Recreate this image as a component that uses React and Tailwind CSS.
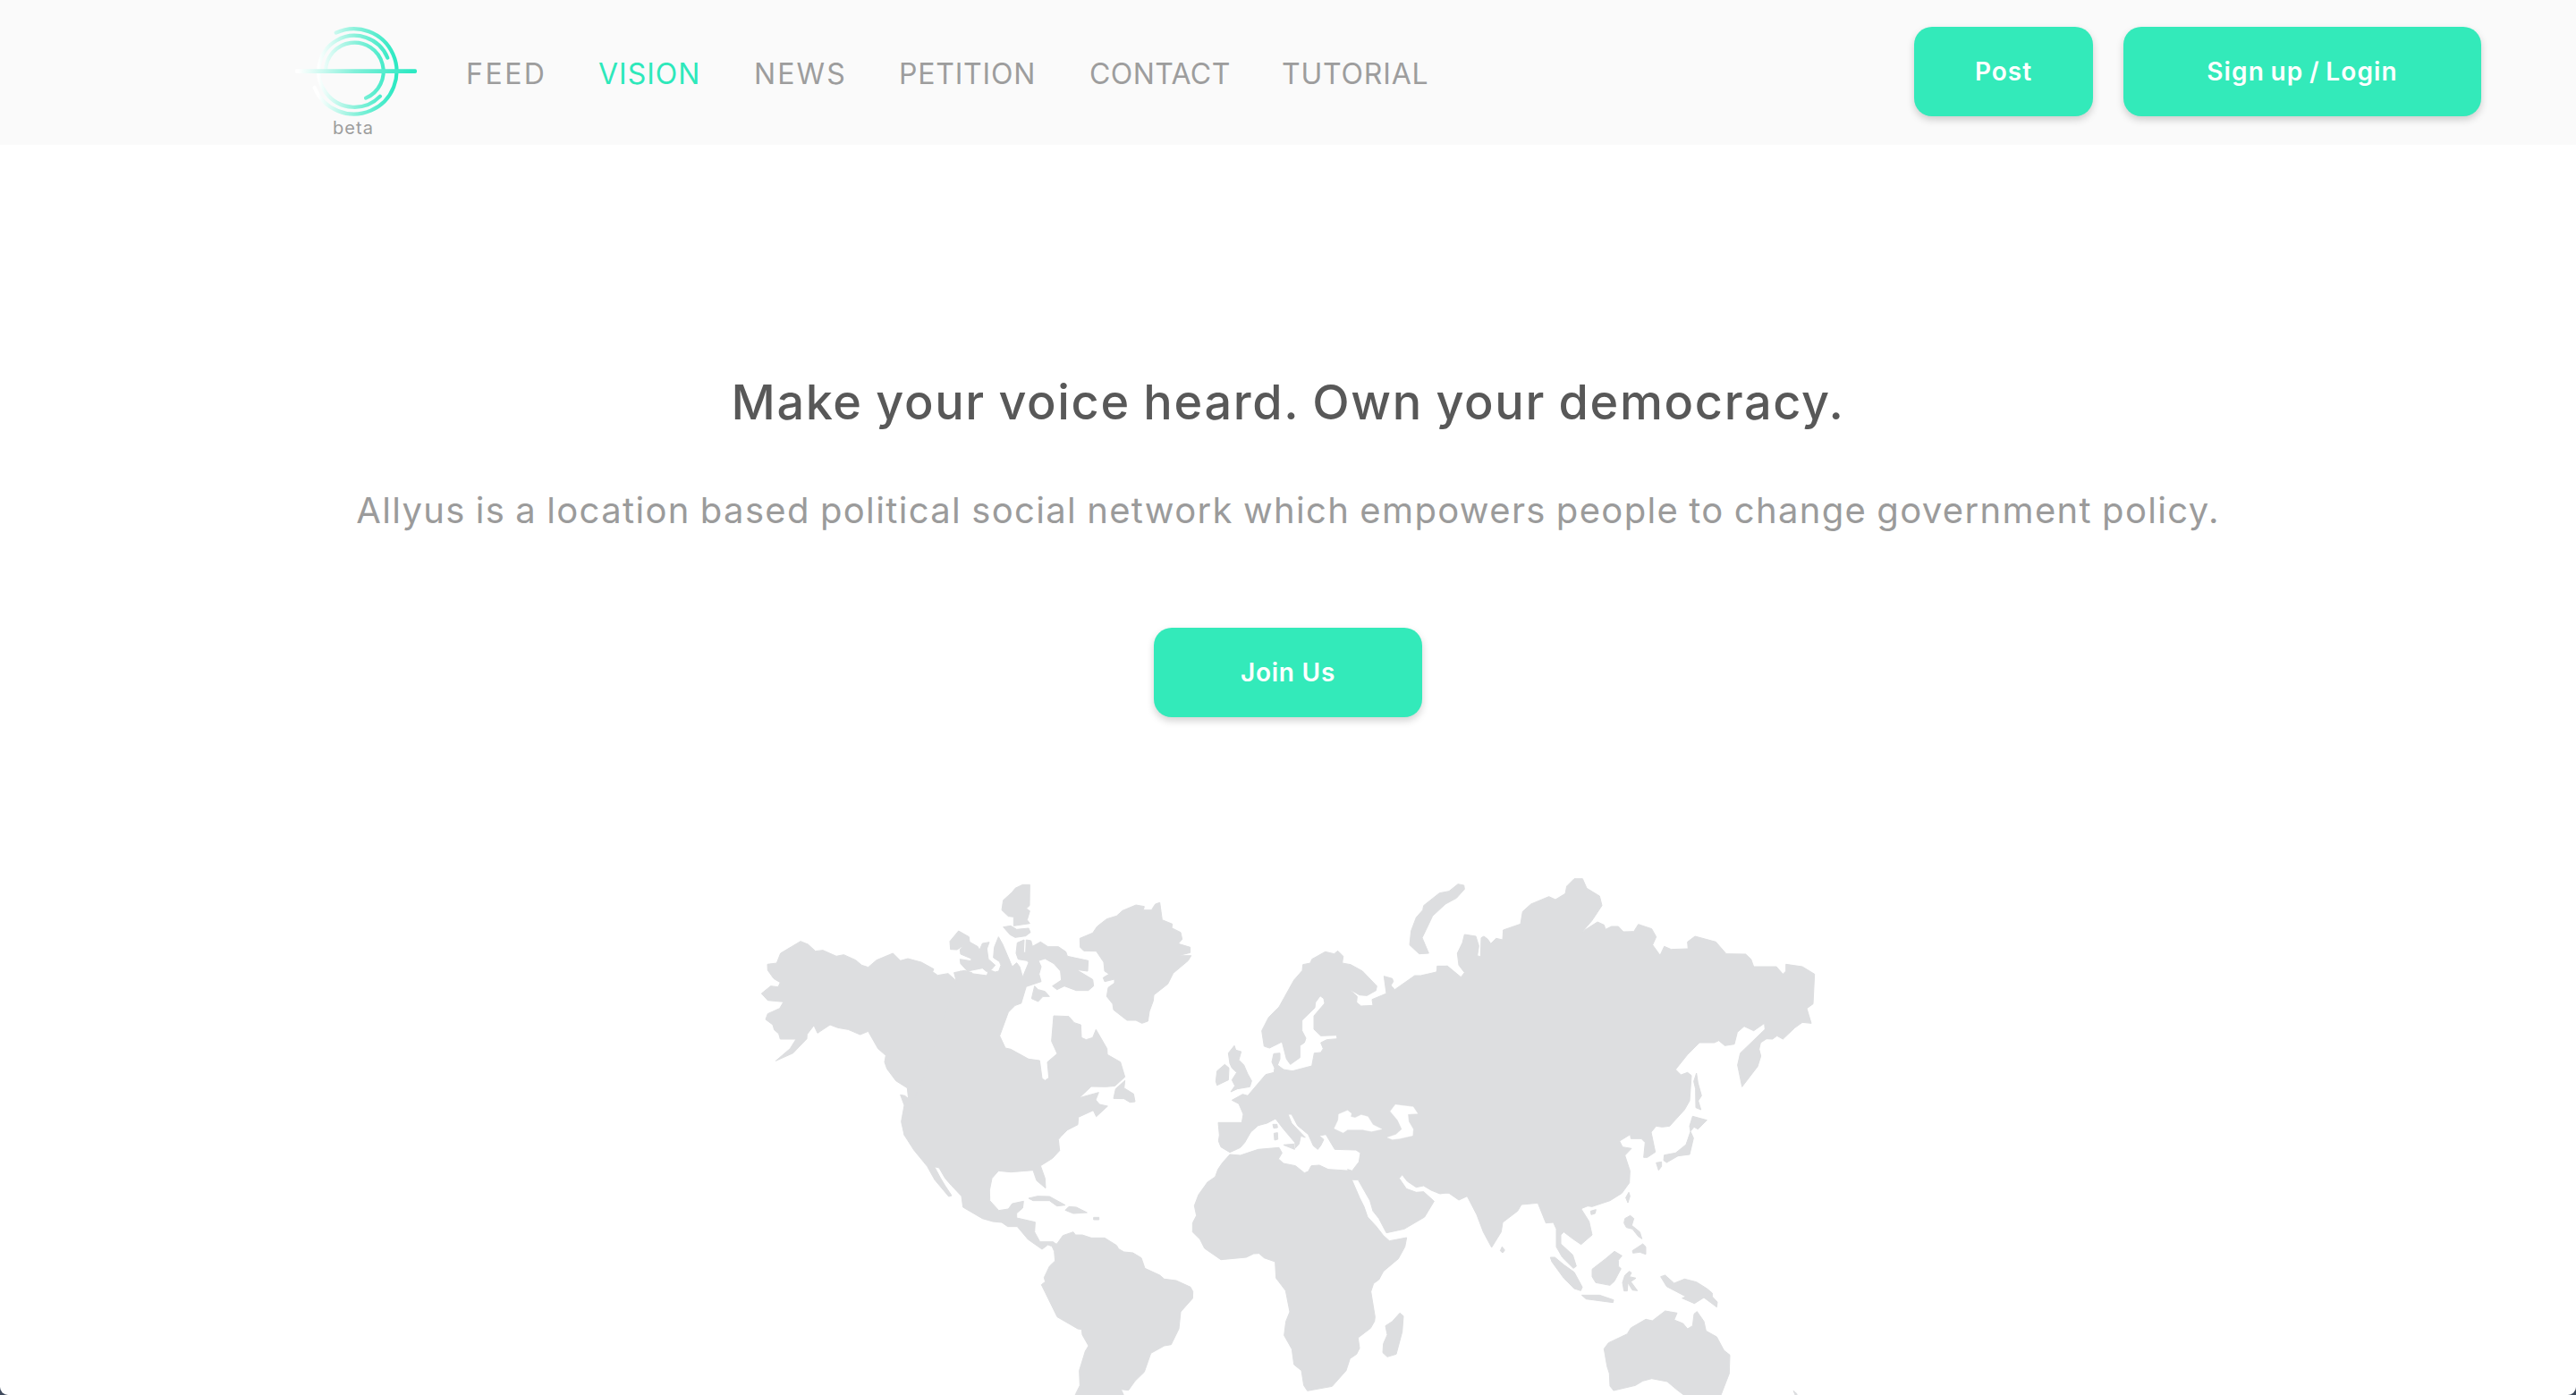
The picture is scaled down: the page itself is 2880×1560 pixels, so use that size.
import React from "react";

const navItems = [
  { label: "FEED", cls: "w-[148px] tracking-[2.5px] text-[#9d9d9d]" },
  { label: "VISION", cls: "w-[174px] tracking-[1px] text-[#2ee8ba]" },
  { label: "NEWS", cls: "w-[162px] tracking-[2.1px] text-[#9d9d9d]" },
  { label: "PETITION", cls: "w-[213px] tracking-[0.8px] text-[#9d9d9d]" },
  { label: "CONTACT", cls: "w-[215px] tracking-[0.4px] text-[#9d9d9d]" },
  { label: "TUTORIAL", cls: "w-[170px] tracking-[0.8px] text-[#9d9d9d]" },
];

// Each tile holds outlines in its own coordinates; x/y place the tile on the map.
const landTiles = [
  {
    x: 0,
    y: 0,
    d: [
      "M165,250L190,260L215,283L240,280L285,300L310,295L350,313L370,330L392,337L420,313L475,290L500,315L525,308L570,320L612,343L608,352L625,364L660,358L687,382L680,355L715,348L740,355L740,900L513,900L503,855L513,800L500,765L515,768L527,778L523,742L485,718L455,678L447,655L451,633L425,610L392,552L365,563L325,546L290,540L264,530L222,558L210,532L187,562L186,577L140,625L82,651L130,610L150,578L97,578L92,560L77,547L72,530L48,512L55,493L95,475L108,453L55,448L34,425L65,400L90,403L97,388L75,375L55,347L54,327L85,323L98,290Z",
    ],
  },
  {
    x: 600,
    y: 0,
    d: [
      // North and Central America
      "M100,350L130,357L190,365L197,345L218,353L230,350L237,330L232,318L212,305L215,270L229,235L243,260L275,335L290,322L300,335L310,370L330,322L325,315L295,310L288,290L292,255L315,245L313,285L320,290L322,245L338,248L343,267L370,252L395,268L430,268L455,285L460,300L530,315L528,350L490,345L545,378L548,400L530,415L490,415L450,400L425,412L410,400L440,380L437,350L415,325L385,308L363,315L372,335L365,360L372,385L322,402L305,458L285,465L262,488L233,567L252,608L270,612L330,645L367,650L375,710L385,717L398,708L393,655L426,627L407,585L414,500L465,502L483,523L505,530L507,573L523,580L545,573L556,546L593,610L594,630L638,655L653,705L620,735L590,738L540,737L500,775L565,757L555,782L568,797L595,803L557,838L547,817L497,840L495,865L460,883L440,903L430,915L434,952L410,978L370,1003L385,1045L387,1078L357,1053L345,1018L270,1024L229,1020L207,1045L199,1085L200,1120L230,1153L262,1148L275,1130L313,1122L310,1145L290,1162L290,1178L352,1192L350,1225L368,1258L412,1258L425,1268L405,1272L395,1268L375,1283L328,1250L292,1207L260,1207L240,1193L210,1190L175,1180L110,1142L105,1105L70,1068L50,1045L30,1010L14,1006L35,1045L50,1070L72,1103L62,1106L15,1050L-10,1005L-55,950L-87,900L-87,860L-20,700Z",
      "M95,215L130,235L132,252L160,268L165,280L175,257L198,253L190,275L195,310L218,330L205,345L190,352L175,340L125,350L102,325L100,310L137,316L138,308L102,293L100,278L115,262L90,278L68,277L66,250Z",
      "M334,60L333,130L322,140L334,148L325,178L334,190L280,198L280,168L262,166L240,145L245,112L275,85L285,72L310,60Z",
      "M245,202L270,198L290,210L330,206L336,220L320,232L285,237L268,228Z",
      "M350,400L362,412L385,418L400,435L378,435L362,452L340,442Z",
      // Greenland
      "M770,120L778,178L812,192L810,205L840,220L845,243L832,258L872,270L872,288L832,298L875,298L865,315L815,357L797,393L750,430L748,450L735,485L730,518L710,525L690,515L660,515L615,480L612,460L592,435L597,405L618,390L618,377L585,385L580,372L600,360L585,350L582,320L557,283L515,282L503,270L502,240L545,222L560,200L592,175L625,165L645,147L690,128L718,133L715,145L742,145L755,125Z",
      "M653,717L650,742L682,762L687,788L670,790L650,778L615,777L622,745Z",
      "M330,1112L360,1105L400,1106L453,1135L425,1138L400,1120L345,1120Z",
      "M453,1152L465,1140L490,1142L526,1160L480,1163Z",
      "M548,1176L566,1176L566,1184L548,1184Z",
    ],
  },
  {
    x: 840,
    y: 990,
    d: [
      // South America
      "M165,275L185,275L205,247L240,235L247,245L270,245L300,255L345,255L385,280L392,292L410,302L440,305L468,322L480,357L530,380L545,393L585,398L633,420L641,435L640,458L600,503L594,560L568,613L545,617L500,642L478,705L447,735L425,766L400,763L408,780L408,800L240,800L248,778L262,750L260,700L280,635L291,617L270,580L268,562L255,560L186,520L133,412L146,402L142,388L160,350L179,332L176,300Z",
      // Africa
      "M765,-25L800,-22L860,-42L930,-48L940,-30L928,-10L945,5L985,13L1015,37L1028,32L1038,13L1065,11L1095,25L1170,30L1175,62L1200,120L1215,150L1227,185L1255,215L1280,247L1300,265L1358,254L1352,285L1330,325L1280,367L1265,395L1247,408L1238,435L1252,520L1250,535L1237,558L1195,590L1200,625L1190,645L1168,660L1155,700L1108,753L1025,768L1013,750L1005,700L980,680L973,628L947,582L953,535L966,503L952,432L920,390L917,335L880,322L863,307L845,308L820,320L735,328L680,290L665,260L640,235L640,205L653,180L646,147L660,110L690,68L716,50L725,25L740,3Z",
      "M1335,507L1347,517L1343,570L1323,645L1293,654L1278,640L1280,610L1293,580L1287,550L1310,535Z",
    ],
  },
  {
    x: 1440,
    y: 30,
    d: [
      // Europe and Middle East
      "M165,928L135,910L127,890L130,870L126,828L205,828L210,800L195,765L172,753L208,733L225,738L285,667L313,660L315,645L306,625L312,597L333,595L333,615L325,635L345,650L375,655L440,638L448,595L470,593L478,580L470,560L490,550L525,547L523,535L470,537L447,515L447,470L483,428L480,412L468,403L452,425L450,443L407,485L407,520L420,545L415,560L400,570L400,610L368,633L355,615L340,557L298,578L280,572L272,520L295,475L330,440L380,350L408,318L410,298L435,293L440,280L485,255L515,262L527,252L545,270L542,293L570,298L610,320L658,370L655,385L625,402L600,400L565,380L592,405L590,425L605,437L645,435L642,415L690,395L682,337L710,345L713,355L705,368L718,382L785,335L805,335L858,323L862,305L895,303L900,310L900,1062L870,1067L840,1055L815,1040L790,1045L760,1025L743,1003L733,1015L757,1050L790,1062L815,1060L850,1092L818,1145L750,1185L690,1198L665,1150L645,1125L635,1090L595,1020L577,1020L560,985L575,990L598,960L603,930L588,920L517,918L487,868L465,872L480,885L470,905L460,918L445,906L428,868L392,838L372,800L360,800L372,830L418,878L403,873L397,900L385,913L383,895L345,850L318,815L290,830L260,838L235,860L215,895L200,912Z",
      "M345,903L380,900L382,918Z",
      "M309,834L323,834L325,845L312,847Z",
      "M313,864L325,862L326,884L315,887Z",
      "M180,570L185,585L203,590L195,618L212,635L225,665L238,688L232,708L190,715L168,725L182,705L172,685L188,660L172,645L165,630L160,595Z",
      "M148,633L162,645L160,685L122,703L118,690L122,655Z",
    ],
  },
  {
    x: 2100,
    y: 0,
    d: [
      "M270,58L290,62L292,75L265,105L228,125L185,165L150,238L172,290L140,292L108,262L113,215L130,170L152,145L155,130L208,88L240,82Z",
      // Asia
      "M200,333L235,333L280,370L292,355L273,330L268,290L285,255L292,227L330,233L340,265L335,298L346,302L348,238L357,233L370,243L380,258L398,240L420,245L422,212L480,192L487,150L515,125L575,100L597,110L630,90L635,65L660,40L688,40L702,72L745,98L753,130L720,180L688,217L738,185L760,195L765,210L785,200L808,200L825,218L860,217L875,193L920,208L935,235L923,262L948,297L962,267L985,277L1042,275L1040,252L1065,233L1135,252L1170,292L1235,293L1253,310L1262,335L1338,335L1360,360L1370,350L1370,327L1425,335L1466,360L1461,460L1440,475L1455,525L1425,522L1400,540L1360,578L1340,567L1325,578L1305,577L1285,590L1280,612L1286,635L1275,670L1223,738L1208,665L1217,625L1300,545L1298,525L1262,550L1230,535L1207,555L1197,595L1165,600L1145,583L1130,590L1080,590L1040,630L1000,680L1018,698L1040,690L1053,700L1047,785L1030,815L980,870L955,873L935,870L918,890L932,957L905,975L893,975L898,925L885,912L850,912L848,898L812,920L822,940L852,945L830,968L847,1020L845,1060L820,1095L780,1120L720,1140L705,1138L683,1147L710,1190L720,1235L683,1267L655,1248L625,1225L615,1235L615,1265L655,1302L667,1340L657,1347L620,1310L600,1275L600,1215L590,1193L565,1195L538,1128L483,1133L470,1155L420,1193L415,1225L383,1277L355,1225L333,1167L301,1105L273,1118L240,1095L200,1093Z",
    ],
  },
  {
    x: 2700,
    y: 0,
    d: [
      "M470,692L475,725L487,768L476,785L485,815L468,808L467,745L461,720Z",
      "M457,837L505,850L475,880L462,873L450,887L447,870Z",
      "M450,888L460,910L447,965L408,970L370,992L360,985L362,967L400,960L435,932Z",
      "M335,993L353,990L353,1005L343,1018Z",
      "M243,1092L247,1105L240,1127L233,1110Z",
      "M115,1155L133,1150L130,1163L117,1167Z",
    ],
  },
  {
    x: 2520,
    y: 990,
    d: [
      "M410,190L428,180L440,190L433,213L460,235L467,258L455,250L435,225L415,220L407,205Z",
      "M435,298L470,275L480,285L480,310L460,303L437,306Z",
      "M345,325L375,300L400,315L388,330L388,350L397,358L375,400L360,414L312,405L300,385L300,360Z",
      "M160,320L175,320L205,345L240,370L267,420L262,432L240,425L205,390L165,335Z",
      "M265,447L325,447L372,463L370,472L280,460Z",
      "M410,380L425,367L432,372L425,385L447,390L430,402L452,432L435,430L420,405L418,433L407,433L402,405Z",
      "M530,385L545,380L575,407L610,393L650,403L685,425L703,440L703,452L720,470L718,487L675,455L643,475L602,457L615,452L550,418Z",
      // Australia
      "M545,500L585,507L575,530L605,542L620,560L637,550L642,510L652,502L675,535L682,567L718,587L742,632L762,648L760,710L733,780L733,800L620,800L605,780L585,765L552,737L500,727L470,735L445,750L372,767L360,752L358,710L350,685L340,627L355,607L418,577L430,557L480,528L502,533Z",
      "M975,768L987,778L987,795Z",
      "M-2,285L7,296L0,305L-8,298Z",
    ],
  },
];

// Black Sea and Caspian Sea
const seas = [
  "M515,848L528,820L530,800L560,787L573,798L570,808L585,812L605,802L628,808L645,835L675,850L640,858L610,852L560,852L545,862Z",
  "M720,768L780,775L795,798L762,800L765,825L780,850L778,872L735,882L710,885L693,878L722,868L742,850L728,820L703,790Z",
];

function WorldMap() {
  return (
    <svg className="mt-[168px] ml-[840px] block h-[590px] w-[1200px] shrink-0" viewBox="0 2 3600 1770" aria-hidden="true">
      {landTiles.map((tile, i) => (
        <g key={i} transform={`translate(${tile.x} ${tile.y})`} fill="#dddee0" stroke="#dddee0" strokeWidth="3" strokeLinejoin="round">
          {tile.d.map((d, j) => (
            <path key={j} d={d} />
          ))}
        </g>
      ))}
      <g transform="translate(1440 30)" fill="#fff" stroke="#fff" strokeWidth="1" strokeLinejoin="round">
        {seas.map((d, j) => (
          <path key={j} d={d} />
        ))}
      </g>
    </svg>
  );
}

function Logo() {
  return (
    <svg className="block h-[104px] w-[140px]" viewBox="30 85 420 312" fill="none" strokeLinecap="round" aria-hidden="true">
      <defs>
        <linearGradient id="ring" gradientUnits="userSpaceOnUse" x1="108" y1="0" x2="365" y2="0">
          <stop offset="0" stopColor="#fff" />
          <stop offset="0.5" stopColor="#86f1da" />
          <stop offset="1" stopColor="#2ee9c3" />
        </linearGradient>
        <linearGradient id="beam" gradientUnits="userSpaceOnUse" x1="42" y1="0" x2="420" y2="0">
          <stop offset="0" stopColor="#fff" />
          <stop offset="0.5" stopColor="#80f0d9" />
          <stop offset="1" stopColor="#2ee9c3" />
        </linearGradient>
      </defs>
      <g stroke="url(#ring)" strokeWidth="12.5">
        <path d="M167,111A143,143 0 1 1 95,295" />
        <path d="M340,195A120,120 0 1 0 315,324" />
        <path d="M132,240A97,97 0 1 1 267,330" />
      </g>
      <rect x="30" y="233" width="408" height="14" rx="5" fill="url(#beam)" />
    </svg>
  );
}

const buttonBase =
  "flex h-[100px] items-center justify-center rounded-[20px] bg-[#33eaba] text-[28px] font-semibold text-white shadow-[0_4px_8px_rgba(0,0,0,0.18)]";

export default function App() {
  return (
    <div className="w-[2880px] bg-[#3f4a5c]">
      <div className="flex h-[1560px] w-[2880px] flex-col overflow-hidden rounded-b-[9px] bg-white font-['Inter',sans-serif]">
        <header className="flex h-[162px] shrink-0 items-start bg-[#fafafa] pr-[106px] pl-[330px]">
          <div className="flex w-[191px] flex-col items-start pt-[28px]">
            <Logo />
            <span className="-mt-[1px] ml-[42px] text-[20px] leading-[24px] tracking-[1.1px] text-[#9d9d9d]">beta</span>
          </div>
          <nav className="flex h-[165px] items-center text-[32px] leading-none">
            {navItems.map((item) => (
              <a key={item.label} className={`block whitespace-nowrap ${item.cls}`}>
                {item.label}
              </a>
            ))}
          </nav>
          <div className="ml-auto flex gap-[34px] pt-[30px]">
            <button className={`${buttonBase} w-[200px] tracking-[1px]`}>Post</button>
            <button className={`${buttonBase} w-[400px] tracking-[1.1px] [word-spacing:-1.5px]`}>Sign up / Login</button>
          </div>
        </header>
        <main className="flex grow flex-col">
          <div className="flex flex-col items-center pt-[248px]">
            <h1 className="text-[54px] leading-[80px] font-medium tracking-[1.65px] whitespace-nowrap text-[#585858] [word-spacing:-1.5px]">
              Make your voice heard. Own your democracy.
            </h1>
            <p className="mt-[51px] text-[40px] leading-[60px] tracking-[1.36px] whitespace-nowrap text-[#9b9b9b] [word-spacing:-1.6px]">
              Allyus is a location based political social network which empowers people to change government policy.
            </p>
            <button className={`${buttonBase} mt-[101px] w-[300px] tracking-[0.75px]`}>Join Us</button>
          </div>
          <WorldMap />
        </main>
      </div>
    </div>
  );
}
